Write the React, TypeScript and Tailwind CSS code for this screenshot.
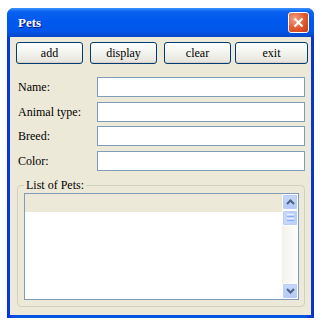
const serif = { fontFamily: '"Liberation Serif", "Times New Roman", serif' }

function XpButton({ label, className }: { label: string; className?: string }) {
  return (
    <button
      className={
        'h-[22px] rounded-[3px] border border-[#003c74] bg-[linear-gradient(#ffffff,#f0f0ea_60%,#e3e2da)] text-[12px] leading-none text-black shadow-[inset_0_-1px_0_#d6d0c5] ' +
        (className ?? '')
      }
    >
      {label}
    </button>
  )
}

function Field({ label }: { label: string }) {
  return (
    <div className="flex h-[20px] items-center">
      <span className="w-[80px] pl-[1px] text-[12px] leading-none text-black">{label}</span>
      <input className="h-[20px] w-[208px] border border-[#7f9db9] bg-white outline-none" />
    </div>
  )
}

function ScrollArrow({ down }: { down?: boolean }) {
  return (
    <div className="flex h-[16px] w-[16px] items-center justify-center rounded-[2px] border border-white bg-[linear-gradient(#c8d8fb,#b4c8f6)] shadow-[inset_0_0_0_1px_#b9cdf6]">
      <svg width="9" height="6" viewBox="0 0 9 6">
        <path
          d={down ? 'M1 1 L4.5 4.5 L8 1' : 'M1 5 L4.5 1.5 L8 5'}
          fill="none"
          stroke="#4d6185"
          strokeWidth="2"
        />
      </svg>
    </div>
  )
}

export default function App() {
  return (
    <div className="h-[326px] w-[322px] bg-white pl-[7px] pt-[8px]" style={serif}>
      <div className="flex h-[310px] w-[307px] flex-col rounded-t-[7px] bg-[linear-gradient(90deg,#0831d9,#0055e5_3%,#0055e5_97%,#0a2fc4)]">
        {/* title bar */}
        <div className="flex h-[29px] items-center justify-between rounded-t-[7px] bg-[linear-gradient(#3d95ff,#0a62f0_12%,#0058ee_45%,#0256ea_80%,#0846c8)] pl-[11px] pr-[5px]">
          <span className="text-[13px] font-bold text-white [text-shadow:1px_1px_#0f1089]">Pets</span>
          <div className="flex h-[21px] w-[21px] items-center justify-center rounded-[3px] border border-white bg-[radial-gradient(circle_at_30%_30%,#f0a080,#e2582f_55%,#c33b14)]">
            <svg width="11" height="11" viewBox="0 0 11 11">
              <path d="M1.5 1.5 L9.5 9.5 M9.5 1.5 L1.5 9.5" stroke="white" strokeWidth="2.2" />
            </svg>
          </div>
        </div>

        {/* client area */}
        <div className="mx-[3px] mb-[3px] flex flex-1 flex-col bg-[#ece9d8] pl-[6px] pr-[3px] pt-[5px]">
          <div className="flex">
            <XpButton label="add" className="w-[67px]" />
            <XpButton label="display" className="ml-[7px] w-[67px]" />
            <XpButton label="clear" className="ml-[7px] w-[67px]" />
            <XpButton label="exit" className="ml-[4px] w-[73px]" />
          </div>

          <div className="ml-[1px] mt-[13px] flex flex-col gap-[4.67px]">
            <Field label="Name:" />
            <Field label="Animal type:" />
            <Field label="Breed:" />
            <Field label="Color:" />
          </div>

          <fieldset className="ml-[1px] mt-[7px] w-[288px] rounded-[4px] border border-[#d0d0bf] pb-[6px] pl-[6px] pr-[5px]">
            <legend className="px-[2px] text-[12px] leading-[15px] text-black">List of Pets:</legend>
            <div className="flex h-[107px] border border-[#7f9db9] bg-white">
              <div className="flex flex-1 flex-col">
                <div className="h-[18px] bg-[#ece9d8]" />
                <div className="flex-1 bg-white" />
              </div>
              <div className="flex w-[16px] flex-col bg-[linear-gradient(90deg,#f3f1ec,#fefefb)]">
                <ScrollArrow />
                <div className="flex h-[16px] w-[16px] flex-col items-center justify-center gap-[1px] rounded-[2px] border border-white bg-[linear-gradient(90deg,#c8d8fb,#bccff8)] shadow-[inset_0_0_0_1px_#b9cdf6]">
                  <div className="h-[1px] w-[7px] bg-[#eef4fe]" />
                  <div className="h-[1px] w-[7px] bg-[#8cb0f8]" />
                  <div className="h-[1px] w-[7px] bg-[#eef4fe]" />
                  <div className="h-[1px] w-[7px] bg-[#8cb0f8]" />
                </div>
                <div className="flex-1" />
                <ScrollArrow down />
              </div>
            </div>
          </fieldset>
        </div>
      </div>
    </div>
  )
}
